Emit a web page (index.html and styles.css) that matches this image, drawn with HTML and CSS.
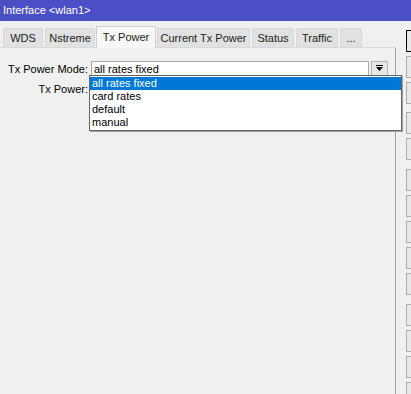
FILE: index.html
```html
<!DOCTYPE html>
<html lang="en">

<head>
    <meta charset="UTF-8">
    <title>Interface &lt;wlan1&gt;</title>
    <link rel="stylesheet" href="styles.css">
</head>

<body>
<div class="window">
    <div class="titlebar">Interface &lt;wlan1&gt;</div>

    <div class="main">
        <div class="left">
            <div class="tabs">
                <div class="tab t-wds">WDS</div>
                <div class="tab t-nstreme">Nstreme</div>
                <div class="tab t-txpower active">Tx Power</div>
                <div class="tab t-current">Current Tx Power</div>
                <div class="tab t-status">Status</div>
                <div class="tab t-traffic">Traffic</div>
                <div class="tab t-more">...</div>
            </div>

            <div class="panel">
                <div class="row">
                    <label>Tx Power Mode:</label>
                    <div class="combo">
                        <div class="combo-value">all rates fixed</div>
                        <div class="combo-btn">
                            <svg width="9" height="8" viewBox="0 0 9 8">
                                <rect x="1" y="0" width="7" height="1" fill="#000"/>
                                <polygon points="1,2 8,2 4.5,6" fill="#000"/>
                            </svg>
                        </div>
                        <ul class="dropdown">
                            <li class="selected">all rates fixed</li>
                            <li>card rates</li>
                            <li>default</li>
                            <li>manual</li>
                        </ul>
                    </div>
                </div>
                <div class="row">
                    <label>Tx Power:</label>
                </div>
            </div>
        </div>

        <!-- side buttons, only their left edges are in view -->
        <div class="buttons">
            <div class="btn focus"></div>
            <div class="btn"></div>
            <div class="btn"></div>
            <div class="btn gap-s"></div>
            <div class="btn"></div>
            <div class="btn gap"></div>
            <div class="btn"></div>
            <div class="btn"></div>
            <div class="btn"></div>
            <div class="btn"></div>
            <div class="btn gap"></div>
            <div class="btn"></div>
            <div class="btn"></div>
            <div class="btn"></div>
        </div>
    </div>
</div>
</body>
</html>
```

FILE: styles.css
```css
html, body {
    margin: 0;
    padding: 0;
    width: 411px;
    height: 394px;
    overflow: hidden;
    background-color: #f0f0f0;
    font-family: 'Liberation Sans', Arial, sans-serif;
    font-size: 11px;
    color: #000;
}

.window {
    display: flex;
    flex-direction: column;
    height: 394px;
}

.titlebar {
    height: 21px;
    line-height: 20px;
    padding-left: 3px;
    background-color: #4b4fc6;
    color: #fff;
    font-size: 11px;
    flex-shrink: 0;
}

.main {
    display: flex;
    flex: 1;
}

.left {
    width: 396px;
    flex-shrink: 0;
    display: flex;
    flex-direction: column;
}

.tabs {
    display: flex;
    align-items: flex-end;
    height: 26px;
    padding-left: 3px;
    border-bottom: 1px solid #d9d9d9;
}

.tab {
    height: 19px;
    line-height: 19px;
    margin-right: 2px;
    box-sizing: border-box;
    text-align: center;
    white-space: nowrap;
    background-color: #e1e1e1;
    border: 1px solid #d9d9d9;
    border-bottom: none;
    font-size: 11px;
    color: #222;
}

.t-wds { width: 40px; }
.t-nstreme { width: 50px; }
.t-txpower { width: 60px; }
.t-current { width: 93px; }
.t-status { width: 42px; }
.t-traffic { width: 42px; }
.t-more { width: 22px; }

.tab.active {
    height: 22px;
    line-height: 20px;
    margin-left: -1px;
    margin-right: 1px;
    background-color: #f7f7f7;
    border-color: #d0d0d0;
    margin-bottom: -1px;
}

.panel {
    flex: 1;
    border-right: 1px solid #a0a0a0;
    padding-top: 13px;
}

.row {
    display: flex;
    align-items: center;
    height: 16px;
    margin-bottom: 4px;
}

.row label {
    width: 88px;
    margin-right: 3px;
    text-align: right;
    font-size: 11px;
}

.combo {
    position: relative;
    display: flex;
}

.combo-value {
    width: 274px;
    height: 14px;
    line-height: 14px;
    padding-left: 2px;
    background-color: #fff;
    border: 1px solid #a8a8a8;
}

.combo-btn {
    width: 15px;
    height: 14px;
    margin-left: 2px;
    background-color: #e6e6e6;
    border: 1px solid #b4b4b4;
    display: flex;
    align-items: center;
    justify-content: center;
}

.dropdown {
    position: absolute;
    top: 14px;
    left: -2px;
    width: 311px;
    margin: 0;
    padding: 1px 0;
    list-style: none;
    background-color: #fff;
    border: 1px solid #646464;
    box-shadow: 1px 1px 0 #a0a0a0;
    z-index: 2;
}

.dropdown li {
    height: 13px;
    line-height: 13px;
    padding-left: 2px;
}

.dropdown li.selected {
    background-color: #0078d7;
    color: #fff;
}

.buttons {
    flex-shrink: 0;
    display: flex;
    flex-direction: column;
    padding-top: 9px;
    padding-left: 10px;
}

.btn {
    width: 80px;
    height: 20px;
    flex-shrink: 0;
    margin-bottom: 4px;
    border: 1px solid #adadad;
    background-color: #e8e8e8;
}

.btn.focus {
    border-color: #000;
}

.btn.gap-s {
    margin-top: 4px;
}

.btn.gap {
    margin-top: 5px;
}
```
